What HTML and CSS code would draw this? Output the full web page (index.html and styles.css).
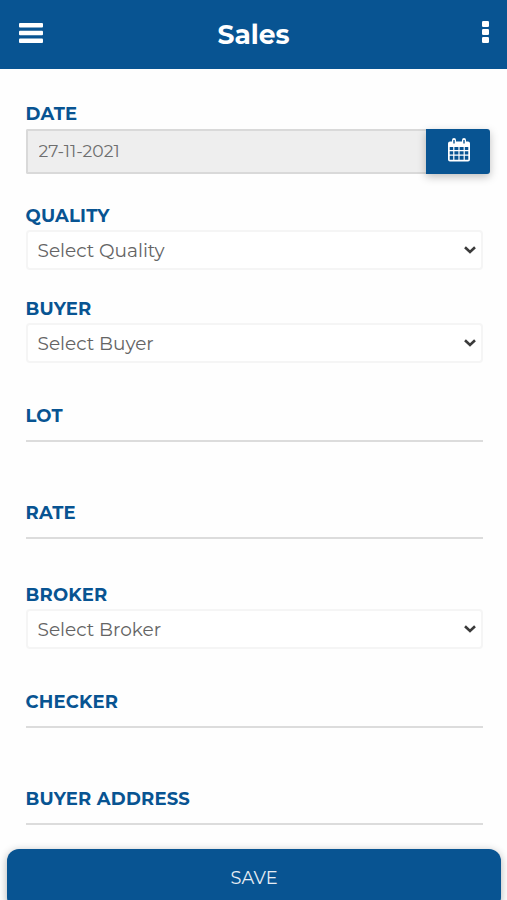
FILE: index.html
```html
<!DOCTYPE html>
<html lang="en">
<head>
    <meta charset="UTF-8">
    <meta name="viewport" content="width=device-width, initial-scale=1.0">
    <title>Sales</title>
    <link rel="stylesheet" href="styles.css">
</head>
<body>
    <div class="header">
        <svg class="menu-icon" viewBox="0 0 24 20" fill="#fff">
            <rect x="0" y="0" width="24" height="4.4" rx="1"/>
            <rect x="0" y="7.8" width="24" height="4.4" rx="1"/>
            <rect x="0" y="15.6" width="24" height="4.4" rx="1"/>
        </svg>
        <h1>Sales</h1>
        <svg class="more-icon" viewBox="0 0 7 22" fill="#fff">
            <rect x="0" y="0" width="7" height="6" rx="1.3"/>
            <rect x="0" y="8" width="7" height="6" rx="1.3"/>
            <rect x="0" y="16" width="7" height="6" rx="1.3"/>
        </svg>
    </div>

    <form class="sales-form">
        <div class="date-field">
            <label for="date">DATE</label>
            <div class="date-group">
                <input type="text" id="date" value="27-11-2021" readonly>
                <button type="button" class="date-button">
                    <svg viewBox="0 0 22 24">
                        <path fill="#fff" fill-rule="evenodd" d="M2 3.5h2V2a2 2 0 0 1 4 0v1.500h6V2a2 2 0 0 1 4 0v1.500h2a2 2 0 0 1 2 2V21.500a2 2 0 0 1-2 2H2a2 2 0 0 1-2-2V5.500a2 2 0 0 1 2-2zM5.300 2v3.500h1.400V2zM15.300 2v3.500h1.400V2zM1.700 9v3h3.500V9zM6.400 9v3h4V9zM11.600 9v3h4V9zM16.800 9v3h3.500V9zM1.700 13.200v3.400h3.500v-3.400zM6.400 13.200v3.400h4v-3.400zM11.600 13.200v3.400h4v-3.400zM16.800 13.200v3.400h3.500v-3.400zM1.700 17.800v4h3.500v-4zM6.400 17.800v4h4v-4zM11.600 17.800v4h4v-4zM16.800 17.800v4h3.500v-4z"/>
                    </svg>
                </button>
            </div>
        </div>

        <div class="select-field">
            <label for="quality">QUALITY</label>
            <div class="select-box">
                <select id="quality"><option>Select Quality</option></select>
                <svg class="chevron" viewBox="0 0 12 8"><path d="M1 1.300l5 4.700 5-4.700"/></svg>
            </div>
        </div>

        <div class="select-field">
            <label for="buyer">BUYER</label>
            <div class="select-box">
                <select id="buyer"><option>Select Buyer</option></select>
                <svg class="chevron" viewBox="0 0 12 8"><path d="M1 1.300l5 4.700 5-4.700"/></svg>
            </div>
        </div>

        <div class="text-field">
            <label for="lot">LOT</label>
            <input type="text" id="lot">
        </div>

        <div class="text-field">
            <label for="rate">RATE</label>
            <input type="text" id="rate">
        </div>

        <div class="select-field">
            <label for="broker">BROKER</label>
            <div class="select-box">
                <select id="broker"><option>Select Broker</option></select>
                <svg class="chevron" viewBox="0 0 12 8"><path d="M1 1.300l5 4.700 5-4.700"/></svg>
            </div>
        </div>

        <div class="text-field">
            <label for="checker">CHECKER</label>
            <input type="text" id="checker">
        </div>

        <div class="text-field">
            <label for="address">BUYER ADDRESS</label>
            <input type="text" id="address">
        </div>
    </form>

    <button type="button" class="save-button">SAVE</button>
</body>
</html>
```

FILE: styles.css
```css
* {
    box-sizing: border-box;
}
body {
    font-family: Montserrat, Inter, sans-serif;
    margin: 0;
    height: 900px;
    overflow: hidden;
    display: flex;
    flex-direction: column;
    background: #fefefe;
}
input, select, button {
    font-family: inherit;
}
.header {
    height: 69px;
    flex: none;
    padding: 0 18px 0 19px;
    display: flex;
    align-items: center;
    justify-content: space-between;
    background: #085492;
    color: #fff;
}
.header h1 {
    margin: -1px 0 0 -18px;
    font-size: 26.5px;
    font-weight: 700;
}
.menu-icon {
    width: 24px;
    height: 20px;
    margin-top: -3px;
}
.more-icon {
    width: 7px;
    height: 22px;
    margin-top: -5px;
}
.sales-form {
    flex: none;
    height: 780px;
    padding: 34px 24.5px 0 25.5px;
}
label {
    display: block;
    height: 22px;
    line-height: 22px;
    font-size: 18px;
    font-weight: 700;
    letter-spacing: 0.2px;
    color: #085492;
}
.date-field {
    margin-right: -7.5px;
    margin-bottom: 31px;
}
.date-group {
    display: flex;
    height: 44.5px;
    margin-top: 4px;
    margin-bottom: 31.5px;
}
.date-group input {
    flex: 1;
    min-width: 0;
    padding: 0 11px 1px;
    border: 2px solid #d9d9d9;
    border-right: none;
    border-radius: 2px 0 0 2px;
    outline: none;
    background: #eee;
    color: #6e6e6e;
    font-size: 17.2px;
}
.date-button {
    width: 64px;
    padding: 0 0 2px;
    border: none;
    border-radius: 0 3px 3px 0;
    background: #085492;
    box-shadow: 0 3px 8px rgba(0, 0, 0, 0.25);
    display: flex;
    align-items: center;
    justify-content: center;
}
.date-button svg {
    width: 22px;
    height: 24px;
    margin-left: 2px;
}
.select-field {
    margin-bottom: 28px;
}
.select-box {
    height: 40px;
    margin-top: 3px;
    padding-right: 5px;
    border: 2px solid #f5f5f5;
    border-radius: 4px;
    background: #fff;
    display: flex;
    align-items: center;
}
.select-box select {
    flex: 1;
    height: 36px;
    padding: 0 10px;
    border: none;
    outline: none;
    appearance: none;
    background: transparent;
    color: #646464;
    font-size: 18.5px;
}
.chevron {
    width: 12px;
    height: 8px;
    fill: none;
    stroke: #3b3b3b;
    stroke-width: 2.6;
}
.text-field {
    padding-top: 14px;
    margin-bottom: 45.5px;
}
.text-field input {
    display: block;
    width: 100%;
    height: 15px;
    padding: 0;
    border: none;
    border-bottom: 2px solid #dcdcdc;
    outline: none;
    background: transparent;
}
.save-button {
    flex: none;
    height: 60px;
    margin: 0 6px 0 7px;
    padding-bottom: 4px;
    border: none;
    border-radius: 12px;
    background: #085492;
    color: #e6edf4;
    font-size: 17.8px;
    box-shadow: 0 2px 8px rgba(0, 0, 0, 0.3);
}
```
